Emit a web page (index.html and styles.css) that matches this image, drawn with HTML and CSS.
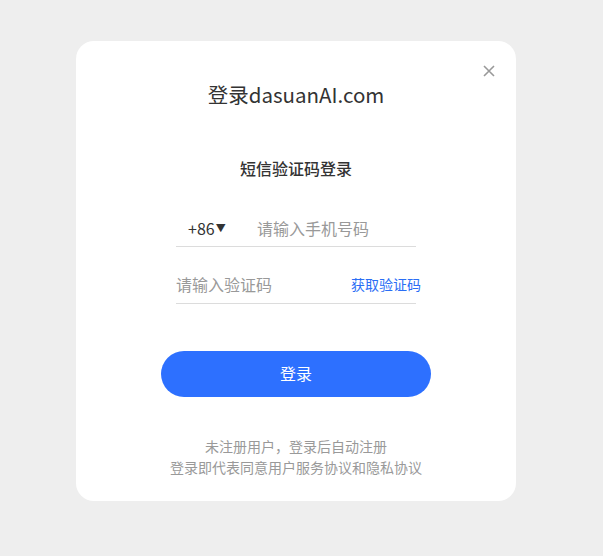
FILE: index.html
```html
<!DOCTYPE html>
<html lang="zh">
<head>
<meta charset="utf-8">
<link rel="stylesheet" href="styles.css">
</head>
<body>
<div class="page">
  <div class="card">
    <button class="close" aria-label="关闭">
      <svg width="12" height="12" viewBox="0 0 12 12"><path d="M1 1L11 11M11 1L1 11" stroke="#999" stroke-width="1.6" fill="none"/></svg>
    </button>
    <h1 class="title">登录dasuanAI.com</h1>
    <h2 class="subtitle">短信验证码登录</h2>
    <div class="form">
      <div class="field first">
        <span class="code">+86<span class="tri">▼</span></span>
        <span class="ph phone">请输入手机号码</span>
      </div>
      <div class="field">
        <span class="ph">请输入验证码</span>
        <span class="get">获取验证码</span>
      </div>
    </div>
    <button class="submit">登录</button>
    <div class="notes">
      <p>未注册用户，登录后自动注册</p>
      <p>登录即代表同意用户服务协议和隐私协议</p>
    </div>
  </div>
</div>
</body>
</html>
```

FILE: styles.css
```css
* { box-sizing: border-box; }
html, body { margin: 0; padding: 0; }
body {
  background: #eeeeee;
  font-family: "Noto Sans CJK SC", "Noto Sans", sans-serif;
  width: 603px;
  height: 556px;
}
.page {
  padding-top: 41px;
  padding-left: 76px;
}
.card {
  position: relative;
  width: 440px;
  height: 460px;
  background: #fff;
  border-radius: 18px;
  display: flex;
  flex-direction: column;
  align-items: center;
  padding-top: 38px;
}
.close {
  position: absolute;
  top: 23px;
  right: 20px;
  width: 14px;
  height: 14px;
  padding: 0;
  border: 0;
  background: none;
  display: flex;
  align-items: center;
  justify-content: center;
}
.title {
  margin: 0;
  font-size: 20.5px;
  font-weight: 400;
  color: #333;
  line-height: 30px;
}
.subtitle {
  margin: 48px 0 0;
  font-size: 16px;
  font-weight: 500;
  color: #333;
  line-height: 22px;
}
.form {
  width: 240px;
  margin-top: 12px;
}
.field {
  height: 57px;
  border-bottom: 1px solid #dcdcdc;
  display: flex;
  align-items: flex-end;
  padding-bottom: 7px;
  font-size: 16px;
  line-height: 24px;
}
.field.first { height: 56px; padding-bottom: 6px; }
.code {
  color: #333;
  margin-left: 12px;
  width: 69px;
  display: flex;
  align-items: center;
}
.tri {
  font-size: 10px;
  margin-left: 1px;
}
.ph { color: #999; flex: 1; }
.get {
  color: #2a6ef5;
  font-size: 14px;
  margin-right: -5px;
}
.submit {
  margin-top: 47px;
  width: 270px;
  height: 46px;
  border: 0;
  border-radius: 23px;
  background: #2d70ff;
  color: #fff;
  font-family: inherit;
  font-size: 16px;
  padding: 0 0 3px;
}
.notes {
  margin-top: 39px;
  text-align: center;
  font-size: 14px;
  color: #999;
  line-height: 21px;
}
.notes p { margin: 0; }
```
